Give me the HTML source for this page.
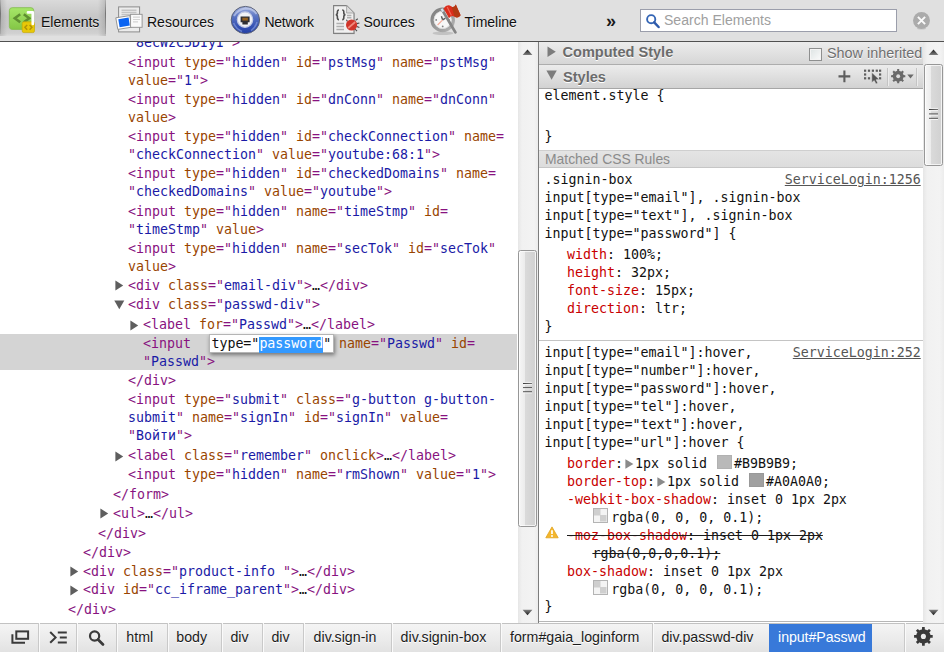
<!DOCTYPE html>
<html lang="en"><head><meta charset="utf-8"><title>Developer Tools</title>
<style>
html,body{margin:0;padding:0;}
body{width:944px;height:652px;position:relative;overflow:hidden;background:#fff;font-family:'Liberation Sans',Arial,sans-serif;}
div,span,svg{position:absolute;box-sizing:border-box;}
span{position:static;}
.ln{font-family:'DejaVu Sans Mono','Liberation Mono',monospace;font-size:13.29px;line-height:18px;height:18px;white-space:pre;letter-spacing:0;}
.t{color:#881280}.n{color:#994500}.v{color:#1a1aa6}.p{color:#111}.w{color:#fff}.pn{color:#c80000}
.ar path{fill:#5e5e5e}
.ar2{position:static;display:inline-block;vertical-align:-0.8px;margin:0 1.2px 0 1.8px}
.ar2 path{fill:#8a8a8a}
.lk{color:#555;text-decoration:underline;}
.strike{color:#1a1a1a;text-decoration:line-through;}
.sw{display:inline-block;width:14.6px;height:14.2px;border:1px solid rgba(0,0,0,.04);vertical-align:-0.9px;margin:-3px 2.4px 0 2px;}
.sw.chk{width:15.2px;height:14.4px;margin:-3px 3.4px 0 0.4px;border-color:#b4b4b4}
.chk{background:
  linear-gradient(#cfcfcf,#cfcfcf) 0 0/50% 50% no-repeat,
  linear-gradient(#cfcfcf,#cfcfcf) 100% 100%/50% 50% no-repeat,#f4f4f4;}
#tb{left:0;top:0;width:944px;height:41px;background:#e0e0e0;}
#tbb{left:0;top:40.6px;width:944px;height:1.4px;background:#505050;}
.tl{font-size:14px;line-height:18px;color:#101010;white-space:pre;text-shadow:0 1px 0 rgba(255,255,255,.6);}
.edit{background:#fff;border:1px solid #b5b5b5;box-shadow:1px 2px 4px rgba(0,0,0,.45);}
.selbg{background:#3399ff;}

.hd{font:bold 14.55px/20px 'Liberation Sans',Arial,sans-serif;color:#6b6b6b;text-shadow:0 1px 0 #fff;white-space:pre;}
.cr{font:14.2px/20px 'Liberation Sans',Arial,sans-serif;color:#1c1c1c;white-space:pre;text-shadow:0 1px 0 #fff;}
</style></head><body>
<div style="left:0;top:334.1px;width:517px;height:35.7px;background:#d4d4d4;"></div>
<div class="ln" style="left:128.1px;top:34.0px"><span class="t">"</span><span class="v">8ecWzC5DIyI</span><span class="t">"&gt;</span></div>
<div class="ln" style="left:128.1px;top:53.7px"><span class="t">&lt;input </span><span class="n">type</span><span class="t">="</span><span class="v">hidden</span><span class="t">"</span><span class="t"> </span><span class="n">id</span><span class="t">="</span><span class="v">pstMsg</span><span class="t">"</span><span class="t"> </span><span class="n">name</span><span class="t">="</span><span class="v">pstMsg</span><span class="t">"</span></div>
<div class="ln" style="left:128.1px;top:72.1px"><span class="n">value</span><span class="t">="</span><span class="v">1</span><span class="t">"</span><span class="t">&gt;</span></div>
<div class="ln" style="left:128.1px;top:90.5px"><span class="t">&lt;input </span><span class="n">type</span><span class="t">="</span><span class="v">hidden</span><span class="t">"</span><span class="t"> </span><span class="n">id</span><span class="t">="</span><span class="v">dnConn</span><span class="t">"</span><span class="t"> </span><span class="n">name</span><span class="t">="</span><span class="v">dnConn</span><span class="t">"</span></div>
<div class="ln" style="left:128.1px;top:108.9px"><span class="n">value</span><span class="t">&gt;</span></div>
<div class="ln" style="left:128.1px;top:127.8px"><span class="t">&lt;input </span><span class="n">type</span><span class="t">="</span><span class="v">hidden</span><span class="t">"</span><span class="t"> </span><span class="n">id</span><span class="t">="</span><span class="v">checkConnection</span><span class="t">"</span><span class="t"> </span><span class="n">name</span><span class="t">=</span></div>
<div class="ln" style="left:128.1px;top:146.2px"><span class="t">"</span><span class="v">checkConnection</span><span class="t">" </span><span class="n">value</span><span class="t">="</span><span class="v">youtube:68:1</span><span class="t">"</span><span class="t">&gt;</span></div>
<div class="ln" style="left:128.1px;top:164.8px"><span class="t">&lt;input </span><span class="n">type</span><span class="t">="</span><span class="v">hidden</span><span class="t">"</span><span class="t"> </span><span class="n">id</span><span class="t">="</span><span class="v">checkedDomains</span><span class="t">"</span><span class="t"> </span><span class="n">name</span><span class="t">=</span></div>
<div class="ln" style="left:128.1px;top:182.7px"><span class="t">"</span><span class="v">checkedDomains</span><span class="t">" </span><span class="n">value</span><span class="t">="</span><span class="v">youtube</span><span class="t">"</span><span class="t">&gt;</span></div>
<div class="ln" style="left:128.1px;top:202.5px"><span class="t">&lt;input </span><span class="n">type</span><span class="t">="</span><span class="v">hidden</span><span class="t">"</span><span class="t"> </span><span class="n">name</span><span class="t">="</span><span class="v">timeStmp</span><span class="t">"</span><span class="t"> </span><span class="n">id</span><span class="t">=</span></div>
<div class="ln" style="left:128.1px;top:220.9px"><span class="t">"</span><span class="v">timeStmp</span><span class="t">" </span><span class="n">value</span><span class="t">&gt;</span></div>
<div class="ln" style="left:128.1px;top:239.9px"><span class="t">&lt;input </span><span class="n">type</span><span class="t">="</span><span class="v">hidden</span><span class="t">"</span><span class="t"> </span><span class="n">name</span><span class="t">="</span><span class="v">secTok</span><span class="t">"</span><span class="t"> </span><span class="n">id</span><span class="t">="</span><span class="v">secTok</span><span class="t">"</span></div>
<div class="ln" style="left:128.1px;top:258.2px"><span class="n">value</span><span class="t">&gt;</span></div>
<svg class="ar" style="left:115.3px;top:280.3px" width="9" height="11" viewBox="0 0 9 11"><path d="M0.4 0.4 L8.2 5.5 L0.4 10.6Z"/></svg>
<div class="ln" style="left:128.1px;top:276.6px"><span class="t">&lt;div </span><span class="n">class</span><span class="t">="</span><span class="v">email-div</span><span class="t">"</span><span class="t">&gt;</span><span class="p">…</span><span class="t">&lt;/div&gt;</span></div>
<svg class="ar" style="left:114.0px;top:300.1px" width="11" height="10" viewBox="0 0 11 10"><path d="M0.3 0.5 L10.3 0.5 L5.3 9.2Z"/></svg>
<div class="ln" style="left:128.1px;top:295.7px"><span class="t">&lt;div </span><span class="n">class</span><span class="t">="</span><span class="v">passwd-div</span><span class="t">"</span><span class="t">&gt;</span></div>
<svg class="ar" style="left:130.3px;top:320.1px" width="9" height="11" viewBox="0 0 9 11"><path d="M0.4 0.4 L8.2 5.5 L0.4 10.6Z"/></svg>
<div class="ln" style="left:143.1px;top:316.4px"><span class="t">&lt;label </span><span class="n">for</span><span class="t">="</span><span class="v">Passwd</span><span class="t">"</span><span class="t">&gt;</span><span class="p">…</span><span class="t">&lt;/label&gt;</span></div>
<div class="ln" style="left:143.1px;top:335.2px"><span class="t">&lt;input </span></div>
<div class="edit" style="left:208.8px;top:334px;width:125.2px;height:19.3px"></div>
<div class="selbg" style="left:259.4px;top:336.6px;width:64px;height:16px"></div>
<div class="ln" style="left:211.4px;top:335.2px"><span class="p">type="</span><span class="w">password</span><span class="p">"</span></div>
<div class="ln" style="left:331.0px;top:335.2px"><span class="t"> </span><span class="n">name</span><span class="t">="</span><span class="v">Passwd</span><span class="t">"</span><span class="t"> </span><span class="n">id</span><span class="t">=</span></div>
<div class="ln" style="left:143.1px;top:352.6px"><span class="t">"</span><span class="v">Passwd</span><span class="t">"&gt;</span></div>
<div class="ln" style="left:128.1px;top:371.7px"><span class="t">&lt;/div&gt;</span></div>
<div class="ln" style="left:128.1px;top:390.9px"><span class="t">&lt;input </span><span class="n">type</span><span class="t">="</span><span class="v">submit</span><span class="t">"</span><span class="t"> </span><span class="n">class</span><span class="t">="</span><span class="v">g-button g-button-</span></div>
<div class="ln" style="left:128.1px;top:408.7px"><span class="v">submit</span><span class="t">" </span><span class="n">name</span><span class="t">="</span><span class="v">signIn</span><span class="t">"</span><span class="t"> </span><span class="n">id</span><span class="t">="</span><span class="v">signIn</span><span class="t">"</span><span class="t"> </span><span class="n">value</span><span class="t">=</span></div>
<div class="ln" style="left:128.1px;top:426.7px"><span class="t">"</span><span class="v">Войти</span><span class="t">"&gt;</span></div>
<svg class="ar" style="left:115.3px;top:450.6px" width="9" height="11" viewBox="0 0 9 11"><path d="M0.4 0.4 L8.2 5.5 L0.4 10.6Z"/></svg>
<div class="ln" style="left:128.1px;top:446.9px"><span class="t">&lt;label </span><span class="n">class</span><span class="t">="</span><span class="v">remember</span><span class="t">"</span><span class="t"> </span><span class="n">onclick</span><span class="t">&gt;</span><span class="p">…</span><span class="t">&lt;/label&gt;</span></div>
<div class="ln" style="left:128.1px;top:466.3px"><span class="t">&lt;input </span><span class="n">type</span><span class="t">="</span><span class="v">hidden</span><span class="t">"</span><span class="t"> </span><span class="n">name</span><span class="t">="</span><span class="v">rmShown</span><span class="t">"</span><span class="t"> </span><span class="n">value</span><span class="t">="</span><span class="v">1</span><span class="t">"</span><span class="t">&gt;</span></div>
<div class="ln" style="left:113.1px;top:485.5px"><span class="t">&lt;/form&gt;</span></div>
<svg class="ar" style="left:100.3px;top:508.4px" width="9" height="11" viewBox="0 0 9 11"><path d="M0.4 0.4 L8.2 5.5 L0.4 10.6Z"/></svg>
<div class="ln" style="left:113.1px;top:504.7px"><span class="t">&lt;ul&gt;</span><span class="p">…</span><span class="t">&lt;/ul&gt;</span></div>
<div class="ln" style="left:98.1px;top:524.5px"><span class="t">&lt;/div&gt;</span></div>
<div class="ln" style="left:83.1px;top:543.5px"><span class="t">&lt;/div&gt;</span></div>
<svg class="ar" style="left:70.3px;top:566.4px" width="9" height="11" viewBox="0 0 9 11"><path d="M0.4 0.4 L8.2 5.5 L0.4 10.6Z"/></svg>
<div class="ln" style="left:83.1px;top:562.7px"><span class="t">&lt;div </span><span class="n">class</span><span class="t">="</span><span class="v">product-info </span><span class="t">"</span><span class="t">&gt;</span><span class="p">…</span><span class="t">&lt;/div&gt;</span></div>
<svg class="ar" style="left:70.3px;top:584.8px" width="9" height="11" viewBox="0 0 9 11"><path d="M0.4 0.4 L8.2 5.5 L0.4 10.6Z"/></svg>
<div class="ln" style="left:83.1px;top:581.1px"><span class="t">&lt;div </span><span class="n">id</span><span class="t">="</span><span class="v">cc_iframe_parent</span><span class="t">"</span><span class="t">&gt;</span><span class="p">…</span><span class="t">&lt;/div&gt;</span></div>
<div class="ln" style="left:68.1px;top:601.4px"><span class="t">&lt;/div&gt;</span></div>
<div class="ln " style="left:544.6px;top:87.4px"><span class="p">element.style {</span></div>
<div class="ln " style="left:544.6px;top:128.2px"><span class="p">}</span></div>
<div class="ln " style="left:544.6px;top:171.1px"><span class="p">.signin-box</span></div>
<div class="ln " style="left:544.6px;top:189.1px"><span class="p">input[type="email"], .signin-box</span></div>
<div class="ln " style="left:544.6px;top:207.1px"><span class="p">input[type="text"], .signin-box</span></div>
<div class="ln " style="left:544.6px;top:225.1px"><span class="p">input[type="password"] {</span></div>
<div class="ln " style="left:567.0px;top:246.3px"><span class="pn">width</span><span class="p">: 100%;</span></div>
<div class="ln " style="left:567.0px;top:264.2px"><span class="pn">height</span><span class="p">: 32px;</span></div>
<div class="ln " style="left:567.0px;top:282.1px"><span class="pn">font-size</span><span class="p">: 15px;</span></div>
<div class="ln " style="left:567.0px;top:300.0px"><span class="pn">direction</span><span class="p">: ltr;</span></div>
<div class="ln " style="left:544.6px;top:318.0px"><span class="p">}</span></div>
<div class="ln " style="left:544.6px;top:343.9px"><span class="p">input[type="email"]:hover,</span></div>
<div class="ln " style="left:544.6px;top:361.9px"><span class="p">input[type="number"]:hover,</span></div>
<div class="ln " style="left:544.6px;top:379.9px"><span class="p">input[type="password"]:hover,</span></div>
<div class="ln " style="left:544.6px;top:397.8px"><span class="p">input[type="tel"]:hover,</span></div>
<div class="ln " style="left:544.6px;top:415.8px"><span class="p">input[type="text"]:hover,</span></div>
<div class="ln " style="left:544.6px;top:433.7px"><span class="p">input[type="url"]:hover {</span></div>
<div class="ln " style="left:567.0px;top:454.8px"><span class="pn">border</span><span class="p">:</span><svg class="ar2" width="9" height="10" viewBox="0 0 9 10"><path d="M0.4 0.3 L8.4 5 L0.4 9.7Z"/></svg><span class="p">1px solid </span><span class="sw" style="background:#b9b9b9"></span><span class="p">#B9B9B9;</span></div>
<div class="ln " style="left:567.0px;top:472.8px"><span class="pn">border-top</span><span class="p">:</span><svg class="ar2" width="9" height="10" viewBox="0 0 9 10"><path d="M0.4 0.3 L8.4 5 L0.4 9.7Z"/></svg><span class="p">1px solid </span><span class="sw" style="background:#a0a0a0"></span><span class="p">#A0A0A0;</span></div>
<div class="ln " style="left:567.0px;top:490.8px"><span class="pn">-webkit-box-shadow</span><span class="p">: inset 0 1px 2px</span></div>
<div class="ln " style="left:592.4px;top:508.7px"><span class="sw chk"></span><span class="p">rgba(0, 0, 0, 0.1);</span></div>
<div class="ln strike" style="left:567.0px;top:526.7px"><span class="pn">-moz-box-shadow</span><span class="p">: inset 0 1px 2px</span></div>
<div class="ln strike" style="left:592.4px;top:544.7px"><span class="p">rgba(0,0,0,0.1);</span></div>
<div class="ln " style="left:567.0px;top:562.7px"><span class="pn">box-shadow</span><span class="p">: inset 0 1px 2px</span></div>
<div class="ln " style="left:592.4px;top:580.7px"><span class="sw chk"></span><span class="p">rgba(0, 0, 0, 0.1);</span></div>
<div class="ln " style="left:544.6px;top:598.4px"><span class="p">}</span></div>
<div class="ln lk" style="left:784.8px;top:171.1px">ServiceLogin:1256</div>
<div class="ln lk" style="left:792.8px;top:343.9px">ServiceLogin:252</div>
<svg style="left:545px;top:525.6px" width="14" height="13" viewBox="0 0 14 13"><path d="M7 0.9 L13.2 11.8 H0.8Z" fill="#f4b62c" stroke="#e0a21c" stroke-width=".8" stroke-linejoin="round"/><path d="M7 4.2 V8" stroke="#fff" stroke-width="1.7"/><circle cx="7" cy="10" r="1" fill="#fff"/></svg>
<div style="left:518px;top:41.5px;width:20.3px;height:581px;background:linear-gradient(90deg,#e6e6e6,#f1f1f1 20%,#f3f3f3 80%,#ececec);"></div>
<svg style="left:522.0px;top:49.3px" width="11" height="7" viewBox="0 0 11 7"><defs><linearGradient id="u1" x1="0" y1="0" x2="0" y2="1"><stop offset="0" stop-color="#1c1c1c"/><stop offset="1" stop-color="#808080"/></linearGradient></defs><path d="M5.5 0.6 L10.4 6 L0.6 6Z" fill="url(#u1)"/></svg>
<svg style="left:522.0px;top:609.3px" width="11" height="7" viewBox="0 0 11 7"><defs><linearGradient id="d1" x1="0" y1="0" x2="0" y2="1"><stop offset="0" stop-color="#808080"/><stop offset="1" stop-color="#1c1c1c"/></linearGradient></defs><path d="M0.6 0.8 L10.4 0.8 L5.5 6.2Z" fill="url(#d1)"/></svg>
<div style="left:518px;top:250px;width:19.2px;height:277px;border:1px solid #979797;border-radius:2.5px;background:linear-gradient(90deg,#f6f6f6,#ececec 34%,#dadada 36%,#d2d2d2 90%,#dcdcdc);box-shadow:inset 0 0 0 1px rgba(255,255,255,.7);"></div>
<div style="left:522.9px;top:383px;width:9px;height:1.2px;background:linear-gradient(90deg,#3c3c3c,#777);box-shadow:0 4.1px 0 #555,0 8.2px 0 #555,0 1.2px 0 #f6f6f6,0 5.3px 0 #f6f6f6,0 9.4px 0 #f6f6f6,0 -1.1px 0 #f0f0f0;"></div>
<div style="left:538.2px;top:41.5px;width:1.1px;height:581px;background:#7d7d7d;"></div>
<div style="left:923.1px;top:41.5px;width:20.9px;height:581px;background:linear-gradient(90deg,#e6e6e6,#f1f1f1 20%,#f3f3f3 80%,#ececec);"></div>
<svg style="left:928.0px;top:49.3px" width="11" height="7" viewBox="0 0 11 7"><defs><linearGradient id="u2" x1="0" y1="0" x2="0" y2="1"><stop offset="0" stop-color="#1c1c1c"/><stop offset="1" stop-color="#808080"/></linearGradient></defs><path d="M5.5 0.6 L10.4 6 L0.6 6Z" fill="url(#u2)"/></svg>
<svg style="left:928.0px;top:609.3px" width="11" height="7" viewBox="0 0 11 7"><defs><linearGradient id="d2" x1="0" y1="0" x2="0" y2="1"><stop offset="0" stop-color="#808080"/><stop offset="1" stop-color="#1c1c1c"/></linearGradient></defs><path d="M0.6 0.8 L10.4 0.8 L5.5 6.2Z" fill="url(#d2)"/></svg>
<div style="left:924px;top:64.4px;width:18.7px;height:101.9px;border:1px solid #979797;border-radius:2.5px;background:linear-gradient(90deg,#f6f6f6,#ececec 34%,#dadada 36%,#d2d2d2 90%,#dcdcdc);box-shadow:inset 0 0 0 1px rgba(255,255,255,.7);"></div>
<div style="left:928.8px;top:109.2px;width:9.2px;height:1.2px;background:linear-gradient(90deg,#3c3c3c,#777);box-shadow:0 4.4px 0 #555,0 8.8px 0 #555,0 1.2px 0 #f6f6f6,0 5.6px 0 #f6f6f6,0 10px 0 #f6f6f6,0 -1.1px 0 #f0f0f0;"></div>
<div style="left:539.3px;top:41.6px;width:383.8px;height:23px;background:linear-gradient(#ececec,#d6d6d6);border-bottom:1px solid #adadad;"></div>
<div style="left:539.3px;top:64.6px;width:383.8px;height:24px;background:linear-gradient(#ececec,#d2d2d2);border-bottom:1.2px solid #a6a6a6;"></div>
<svg style="left:547px;top:45.6px" width="10" height="12" viewBox="0 0 10 12"><path d="M0.5 0.4 L8.8 5.7 L0.5 11Z" fill="#7c7c7c"/></svg>
<svg style="left:546px;top:70.3px" width="12" height="10" viewBox="0 0 12 10"><path d="M0.4 0.5 L10.8 0.5 L5.6 9.7Z" fill="#7c7c7c"/></svg>
<div class="hd" style="left:562.5px;top:42.1px">Computed Style</div>
<div class="hd" style="left:563px;top:66.8px">Styles</div>
<div style="left:809px;top:48px;width:13px;height:13px;border:1px solid #8e8f8f;background:linear-gradient(135deg,#dde3e3,#fbfbfb);box-shadow:inset 0 0 0 1px #f4f4f4;"></div>
<div style="left:827px;top:43.9px;font:14.4px/18px 'Liberation Sans',Arial,sans-serif;color:#6f6f6f;white-space:pre;text-shadow:0 1px 0 #fff">Show inherited</div>
<svg style="left:838px;top:69.5px" width="13" height="13" viewBox="0 0 13 13"><path d="M6.4 0.5 V12.3 M0.5 6.4 H12.3" stroke="#5e5e5e" stroke-width="2.1"/></svg>
<svg style="left:863px;top:68px" width="20" height="17" viewBox="0 0 20 17"><g fill="#5e5e5e"><rect x="1" y="1.6" width="2.2" height="2.2"/><rect x="4.9" y="1.6" width="2.2" height="2.2"/><rect x="8.8" y="1.6" width="2.2" height="2.2"/><rect x="12.7" y="1.6" width="2.2" height="2.2"/><rect x="16" y="1.6" width="2.2" height="2.2"/><rect x="1" y="5.4" width="2.2" height="2.2"/><rect x="1" y="9.2" width="2.2" height="2.2"/><rect x="4.9" y="9.2" width="2.2" height="2.2"/><rect x="16" y="5.4" width="2.2" height="2.2"/><rect x="16" y="9.2" width="2.2" height="2.2"/></g><path d="M8.8 4.4 L8.8 14.6 L11.2 12.6 L13 16 L14.8 15 L13 11.8 L16.2 11.4Z" fill="#555" stroke="#dcdcdc" stroke-width=".5"/></svg>
<div style="left:887px;top:67.5px;width:1px;height:18px;background:#c4c4c4;box-shadow:1px 0 0 #ececec;"></div>
<div style="left:916px;top:67.5px;width:1px;height:18px;background:#c4c4c4;box-shadow:1px 0 0 #ececec;"></div>
<svg style="left:890.4px;top:67.6px" width="16.4" height="16.4" viewBox="-8.2 -8.2 16.4 16.4"><path d="M4.92 -1.10 L7.13 -1.01 L7.13 1.01 L4.92 1.10 L4.26 2.70 L5.76 4.32 L4.32 5.76 L2.70 4.26 L1.10 4.92 L1.01 7.13 L-1.01 7.13 L-1.10 4.92 L-2.70 4.26 L-4.32 5.76 L-5.76 4.32 L-4.26 2.70 L-4.92 1.10 L-7.13 1.01 L-7.13 -1.01 L-4.92 -1.10 L-4.26 -2.70 L-5.76 -4.32 L-4.32 -5.76 L-2.70 -4.26 L-1.10 -4.92 L-1.01 -7.13 L1.01 -7.13 L1.10 -4.92 L2.70 -4.26 L4.32 -5.76 L5.76 -4.32 L4.26 -2.70Z" fill="#6a6a6a"/><circle cx="0" cy="0" r="5.47" fill="#6a6a6a"/><circle cx="0" cy="0" r="1.94" fill="#dcdcdc"/></svg>
<svg style="left:907px;top:74px" width="7" height="5" viewBox="0 0 7 5"><path d="M0.3 0.5 H6.7 L3.5 4.4Z" fill="#6a6a6a"/></svg>
<div style="left:539.3px;top:150.3px;width:383.8px;height:17.4px;background:linear-gradient(#e4e4e4,#dcdcdc);border-top:1px solid #cfcfcf;border-bottom:1px solid #c6c6c6;"></div>
<div style="left:545px;top:150px;font:13.9px/18px 'Liberation Sans',Arial,sans-serif;color:#8b8b8b;white-space:pre;">Matched CSS Rules</div>
<div style="left:539.3px;top:621px;width:383.8px;height:1px;background:#b6b6b6;"></div>
<div style="left:539.3px;top:339.6px;width:383.8px;height:1px;background:#c4c4c4;"></div>
<div id="tb"></div>
<div style="left:0;top:0;width:105.5px;height:35.5px;background:linear-gradient(90deg,rgba(0,0,0,.13),rgba(0,0,0,0) 7px,rgba(0,0,0,0) 98px,rgba(0,0,0,.13)),linear-gradient(#dadada,#c7c7c7 45%,#c9c9c9 76%,#d1d1d1 93%,#dcdcdc);"></div>
<div style="left:104.5px;top:0;width:1.3px;height:34px;background:linear-gradient(rgba(120,120,120,.2),rgba(110,110,110,.9) 40%,rgba(120,120,120,.2));"></div>
<div style="left:0;top:0;width:1px;height:34px;background:linear-gradient(rgba(120,120,120,.2),rgba(100,100,100,.8) 40%,rgba(120,120,120,.2));"></div>
<svg style="left:8px;top:5px" width="28" height="29" viewBox="0 0 28 29">
<defs><linearGradient id="gg" x1="0" y1="0" x2="0" y2="1"><stop offset="0" stop-color="#a6e668"/><stop offset="1" stop-color="#84c646"/></linearGradient></defs>
<rect x="1.4" y="2.7" width="24.3" height="21.7" rx="2.8" fill="url(#gg)" stroke="#86bd52" stroke-width=".9"/>
<path d="M12.2 9.2 L6.8 13.2 L12.2 17.2 M15.8 9.2 L21.2 13.2 L15.8 17.2" fill="none" stroke="#5f8f31" stroke-width="2.6"/>
<rect x="14.2" y="16.8" width="12.3" height="10.8" rx="1.7" fill="#e8c808" stroke="#c9aa06" stroke-width=".7"/>
<path d="M19.2 19.9 L16.9 22.3 L19.2 24.7 M21.6 19.9 L23.9 22.3 L21.6 24.7" fill="none" stroke="#b39406" stroke-width="1.5"/>
<path d="M20 7.4 H24.8 V19" fill="none" stroke="#fff" stroke-width="2.7" stroke-linecap="round" stroke-linejoin="round"/>
</svg>
<div class="tl" style="left:41px;top:12.5px">Elements</div>
<svg style="left:114px;top:5px" width="30" height="29" viewBox="0 0 30 29">
<rect x="4.6" y="1.9" width="21" height="25" fill="#ececec" stroke="#8c8c8c" stroke-width="1"/>
<path d="M7.5 5.2H22.5M7.5 7.5H22.5M7.5 9.6H22.5" stroke="#c4c4c4" stroke-width="1.4"/>
<path d="M1.8 12.8 L15.8 10.6 L17.6 22.2 L3.8 24.4Z" fill="#fff" stroke="#8a8a8a" stroke-width=".9"/>
<path d="M4.3 14.3 L14.6 12.6 L15.8 20.6 L5.6 22.3Z" fill="#0b64f2"/>
<rect x="16.6" y="9.3" width="11.5" height="13" fill="#fafafa" stroke="#8e8e8e" stroke-width=".9"/>
<path d="M19 12.2H26M19 14.5H26M19 16.8H24" stroke="#d4d4d4" stroke-width="1.2"/>
</svg>
<div class="tl" style="left:147px;top:12.5px">Resources</div>
<svg style="left:229px;top:4px" width="33" height="33" viewBox="0 0 33 33">
<defs><linearGradient id="ng" x1="0" y1="0" x2="0" y2="1"><stop offset="0" stop-color="#a3b2df"/><stop offset=".35" stop-color="#5d76c4"/><stop offset=".75" stop-color="#3350b2"/><stop offset="1" stop-color="#2540a6"/></linearGradient></defs>
<ellipse cx="16.4" cy="16" rx="14.2" ry="13.6" fill="url(#ng)" stroke="#5b6277" stroke-width="1"/>
<path d="M5 12 Q9 5.5 17 4.6 Q24 4.6 27.6 10" stroke="#d5dcf2" stroke-width="2" fill="none" opacity=".55"/>
<path d="M4.6 19 Q7 25 13 27.4 M22 26.6 Q26.6 23.6 28 18" stroke="#8fa3df" stroke-width="1.6" fill="none" opacity=".6"/>
<circle cx="16" cy="15.6" r="7.7" fill="#f1f2f6" stroke="#c3cae4" stroke-width="1.2"/>
<path d="M11.6 12.5 H20.6 V18.2 H18.8 V20.4 H13.4 V18.2 H11.6Z" fill="#2e2e33"/>
<rect x="13.3" y="13.7" width="5.6" height="2.9" fill="#94601f"/>
</svg>
<div class="tl" style="left:264.5px;top:12.5px;letter-spacing:-0.3px">Network</div>
<svg style="left:331px;top:3px" width="30" height="33" viewBox="0 0 30 33">
<path d="M3.4 3.4 H16.4 L23.8 10.8 V31.2 H3.4Z" fill="#b9b9b9" opacity=".7"/>
<path d="M2.6 2.6 H15.6 L23 10 V30.4 H2.6Z" fill="#f0f0f0" stroke="#808080" stroke-width="1.1"/>
<path d="M15.6 2.6 V10 H23Z" fill="#dcdcdc" stroke="#9a9a9a" stroke-width=".8"/>
<path d="M8 7 Q6.2 7 6.4 9.4 Q6.6 11.6 4.8 11.8 Q6.6 12 6.4 14.2 Q6.2 16.6 8 16.6 M11.2 7 Q13 7 12.8 9.4 Q12.6 11.6 14.4 11.8 Q12.6 12 12.8 14.2 Q13 16.6 11.2 16.6" fill="none" stroke="#505050" stroke-width="1.6"/>
<path d="M5.4 20.4H13M5.4 23.4H13M5.4 26.4H13M16 12.4H20.4M16 14.8H20.4" stroke="#b0b0b0" stroke-width="1.5"/>
<path d="M24.6 17.4l2.2-1.6M25.8 20.6l2.6-.6M25.8 23.6l2.6 1M24 26l2 2.2M16.4 18.4l-1-1.6" stroke="#4a4a4a" stroke-width="1.1"/>
<circle cx="20.6" cy="22" r="5.6" fill="#d0352a"/>
<path d="M17.2 25 L24.2 19" stroke="#f0897b" stroke-width="1.7"/>
</svg>
<div class="tl" style="left:363.5px;top:12.5px">Sources</div>
<svg style="left:429px;top:3px" width="34" height="33" viewBox="0 0 34 33">
<defs><linearGradient id="cg" x1="0" y1="0" x2="1" y2="1"><stop offset="0" stop-color="#7e7e7e"/><stop offset="1" stop-color="#b4b4b4"/></linearGradient></defs>
<ellipse cx="14" cy="30.2" rx="10.5" ry="1.7" fill="#b8b8b8" opacity=".75"/>
<circle cx="13.7" cy="16.9" r="10.6" fill="#f7f7f7" stroke="url(#cg)" stroke-width="3.4"/>
<circle cx="13.7" cy="16.9" r="8.6" fill="none" stroke="#dcdcdc" stroke-width=".8"/>
<path d="M13.7 16.9 L12.4 13.2 M13.7 16.9 L16.4 15.2" stroke="#5a5a5a" stroke-width="1.4"/>
<path d="M13.7 16.9 L8.6 22" stroke="#f2a896" stroke-width="1.1"/>
<circle cx="7.2" cy="16.9" r=".9" fill="#808080"/><circle cx="13.7" cy="23.4" r=".9" fill="#808080"/><circle cx="20" cy="16.9" r=".9" fill="#808080"/>
<path d="M12.8 6.2 L26.4 29.4" stroke="#858585" stroke-width="2.8" stroke-linecap="round"/>
<path d="M12.6 5.8 L14.2 8.6" stroke="#d4e2ea" stroke-width="2.2"/>
<path d="M14.6 5.6 Q18 0.4 22.4 3.4 Q25 5.2 26.8 1.4 L31.6 12.2 Q29 16 25.6 13.8 Q22.4 11.6 20 15.2Z" fill="#dc2d1c"/>
<path d="M22.4 3.4 Q25 5.2 26.8 1.4 L31.6 12.2 Q29 16 25.6 13.8Z" fill="#b23a14"/>
<path d="M18.2 4 L22.4 12.4" stroke="#f47a6a" stroke-width="1.2" opacity=".8"/>
</svg>
<div class="tl" style="left:464.5px;top:12.5px">Timeline</div>
<div style="left:606px;top:10px;font:bold 18px/22px 'Liberation Sans',Arial,sans-serif;color:#1a1a1a">»</div>
<div style="left:640px;top:9.1px;width:257px;height:22.6px;background:#fff;border:1px solid #9b9eab;"></div>
<svg style="left:645px;top:13px" width="16" height="16" viewBox="0 0 16 16"><circle cx="6.2" cy="6.2" r="4.1" fill="none" stroke="#3465b5" stroke-width="1.9"/><path d="M9.2 9.4 L13.6 14" stroke="#2f5bab" stroke-width="2.5" stroke-linecap="round"/></svg>
<div style="left:664px;top:11px;font:14.05px/19px 'Liberation Sans',Arial,sans-serif;color:#a0a0a0;white-space:pre">Search Elements</div>
<svg style="left:912px;top:10.8px" width="19" height="20" viewBox="0 0 19 20"><ellipse cx="9.5" cy="17.6" rx="4.5" ry="1" fill="#c4c4c4"/><circle cx="9.5" cy="9.5" r="8.45" fill="#ababab"/><path d="M5.9 5.9 L13.1 13.1 M13.1 5.9 L5.9 13.1" stroke="#fafafa" stroke-width="2"/></svg>
<div id="tbb"></div>
<div style="left:0;top:622.9px;width:944px;height:29.1px;background:linear-gradient(#f4f4f4,#ebebeb 55%,#e2e2e2);border-top:1px solid #c2c2c2;"></div>
<div style="left:37.6px;top:623.3px;width:1px;height:28.7px;background:#c9c9c9;box-shadow:1px 0 0 #fafafa;"></div>
<div style="left:76.2px;top:623.3px;width:1px;height:28.7px;background:#c9c9c9;box-shadow:1px 0 0 #fafafa;"></div>
<div style="left:115.8px;top:623.3px;width:1px;height:28.7px;background:#c9c9c9;box-shadow:1px 0 0 #fafafa;"></div>
<svg style="left:9px;top:627px" width="24" height="20" viewBox="0 0 24 20"><rect x="7.3" y="4.4" width="11.8" height="7.4" fill="none" stroke="#3a3a3a" stroke-width="2"/><path d="M3.4 7.2 V15.8 H16" fill="none" stroke="#3a3a3a" stroke-width="2"/></svg>
<svg style="left:47px;top:628px" width="22" height="18" viewBox="0 0 22 18"><path d="M3.2 4 L8.6 9.4 L3.2 14.8" fill="none" stroke="#3a3a3a" stroke-width="2"/><path d="M10.8 4.4 H19.8 M12.8 9.4 H19.8 M10.8 14.4 H19.8" stroke="#3a3a3a" stroke-width="2"/></svg>
<svg style="left:86px;top:627px" width="22" height="20" viewBox="0 0 22 20"><circle cx="8.6" cy="9" r="4.6" fill="none" stroke="#3a3a3a" stroke-width="2.2"/><path d="M12 12.6 L17 17.4" stroke="#3a3a3a" stroke-width="2.8" stroke-linecap="round"/></svg>
<div class="cr" style="left:126.3px;top:626.9px">html</div>
<div style="left:166.8px;top:623.3px;width:1px;height:28.7px;background:#c9c9c9;box-shadow:1px 0 0 #fafafa;"></div>
<div class="cr" style="left:176.3px;top:626.9px">body</div>
<div style="left:221.0px;top:623.3px;width:1px;height:28.7px;background:#c9c9c9;box-shadow:1px 0 0 #fafafa;"></div>
<div class="cr" style="left:230.4px;top:626.9px">div</div>
<div style="left:262.2px;top:623.3px;width:1px;height:28.7px;background:#c9c9c9;box-shadow:1px 0 0 #fafafa;"></div>
<div class="cr" style="left:271.4px;top:626.9px">div</div>
<div style="left:303.1px;top:623.3px;width:1px;height:28.7px;background:#c9c9c9;box-shadow:1px 0 0 #fafafa;"></div>
<div class="cr" style="left:313.6px;top:626.9px">div.sign-in</div>
<div style="left:390.8px;top:623.3px;width:1px;height:28.7px;background:#c9c9c9;box-shadow:1px 0 0 #fafafa;"></div>
<div class="cr" style="left:400.6px;top:626.9px">div.signin-box</div>
<div style="left:499.8px;top:623.3px;width:1px;height:28.7px;background:#c9c9c9;box-shadow:1px 0 0 #fafafa;"></div>
<div class="cr" style="left:510.0px;top:626.9px">form#gaia_loginform</div>
<div style="left:651.8px;top:623.3px;width:1px;height:28.7px;background:#c9c9c9;box-shadow:1px 0 0 #fafafa;"></div>
<div class="cr" style="left:661.4px;top:626.9px">div.passwd-div</div>
<div style="left:768.7px;top:623.7px;width:103.8px;height:28.3px;background:#3879d9;"></div>
<div class="cr" style="left:778.1px;top:626.9px;color:#fff;text-shadow:none;letter-spacing:-0.08px">input#Passwd</div>
<div style="left:904.2px;top:623.3px;width:1px;height:28.7px;background:#c9c9c9;box-shadow:1px 0 0 #fafafa;"></div>
<svg style="left:913.0px;top:626.2px" width="20.8" height="20.8" viewBox="-10.4 -10.4 20.8 20.8"><path d="M6.42 -1.44 L9.31 -1.32 L9.31 1.32 L6.42 1.44 L5.56 3.53 L7.52 5.64 L5.64 7.52 L3.53 5.56 L1.44 6.42 L1.32 9.31 L-1.32 9.31 L-1.44 6.42 L-3.53 5.56 L-5.64 7.52 L-7.52 5.64 L-5.56 3.53 L-6.42 1.44 L-9.31 1.32 L-9.31 -1.32 L-6.42 -1.44 L-5.56 -3.53 L-7.52 -5.64 L-5.64 -7.52 L-3.53 -5.56 L-1.44 -6.42 L-1.32 -9.31 L1.32 -9.31 L1.44 -6.42 L3.53 -5.56 L5.64 -7.52 L7.52 -5.64 L5.56 -3.53Z" fill="#3a3a3a"/><circle cx="0" cy="0" r="7.14" fill="#3a3a3a"/><circle cx="0" cy="0" r="2.54" fill="#ececec"/></svg>
</body></html>
